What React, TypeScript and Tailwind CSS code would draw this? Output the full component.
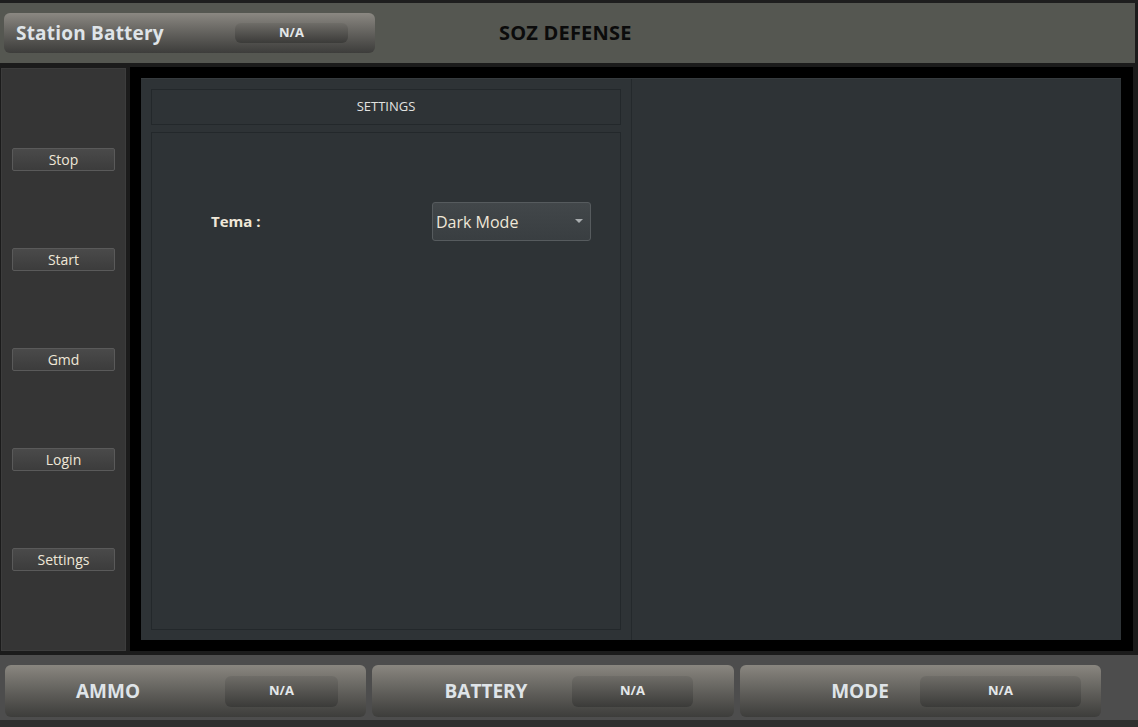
import React from "react";

const font = { fontFamily: '"Open Sans", "Noto Sans", "DejaVu Sans", sans-serif' };

function Pill({ w, h }: { w: string; h: string }) {
  return (
    <div
      className={`${w} ${h} rounded-[6px] bg-gradient-to-b from-[#6f6d68] to-[#3b3b39] flex items-center justify-center text-[13px] font-bold text-[#e4e8ea]`}
    >
      N/A
    </div>
  );
}

function SideButton({ label }: { label: string }) {
  return (
    <div className="ml-[10px] w-[103px] h-[23px] rounded-[2px] border border-[#5a5a5a] bg-gradient-to-b from-[#4a4a4a] to-[#3c3c3c] flex items-center justify-center text-[14px] text-[#efe7d8]">
      {label}
    </div>
  );
}

function BottomButton({
  label,
  labelCls,
  pillW,
  w,
}: {
  label: string;
  labelCls: string;
  pillW: string;
  w: string;
}) {
  return (
    <div
      className={`${w} h-[52px] rounded-[6px] bg-gradient-to-b from-[#8a8780] to-[#3d3d3b] flex items-center`}
    >
      <div className={`${labelCls} flex justify-center text-[19px] font-bold text-[#dfe4e8]`}>{label}</div>
      <Pill w={pillW} h="h-[31px]" />
    </div>
  );
}

export default function App() {
  return (
    <div className="w-[1138px] h-[727px] bg-[#1b1b1b] flex flex-col overflow-hidden" style={font}>
      <div className="h-[3px] bg-[#1e1e1e]" />
      {/* header */}
      <div className="h-[60px] bg-[#555751] flex items-center mr-[3px]">
        <div className="ml-[4px] w-[371px] h-[40px] rounded-[6px] bg-gradient-to-b from-[#8b8882] to-[#3d3d3b] flex items-center">
          <div className="ml-[12px] w-[219px] text-[19px] font-bold text-[#dfe4e8] tracking-[0.2px]">Station Battery</div>
          <Pill w="w-[113px]" h="h-[20px]" />
        </div>
        <div className="ml-[124px] text-[20px] font-bold text-[#0b0b0b] tracking-[0.2px]">SOZ DEFENSE</div>
      </div>
      <div className="h-[4px] bg-[#1b1b1b]" />
      {/* main */}
      <div className="h-[584px] flex">
        <div className="ml-[1px] mt-[1px] w-[125px] h-[583px] bg-[#353535] border border-[#3c3c3c] flex flex-col pt-[79px] gap-[77px]">
          <SideButton label="Stop" />
          <SideButton label="Start" />
          <SideButton label="Gmd" />
          <SideButton label="Login" />
          <SideButton label="Settings" />
        </div>
        <div className="ml-[4px] w-[1003px] h-[584px] bg-black pt-[11px] pl-[11px]">
          <div className="w-[980px] h-[562px] bg-[#2e3336] border-t border-[#363b3e] flex">
            <div className="w-[491px] h-full border-r border-[#24292c] p-[10px] flex flex-col gap-[7px]">
              <div className="h-[36px] border border-[#23282b] flex items-center justify-center text-[13px] text-[#e2e2e0]">
                SETTINGS
              </div>
              <div className="flex-1 border border-[#23282b] pt-[69px] pl-[59px]">
                <div className="flex items-center">
                  <div className="w-[221px] text-[15px] font-bold text-[#efe7d8]">Tema :</div>
                  <div className="w-[159px] h-[39px] rounded-[3px] border border-[#565b5e] bg-gradient-to-b from-[#42474a] to-[#393e41] flex items-center pl-[3px] pr-[7px]">
                    <span className="flex-1 text-[16px] text-[#efe7d8]">Dark Mode</span>
                    <svg width="8" height="5" viewBox="0 0 8 5">
                      <path d="M0 0 L8 0 L4 4 Z" fill="#a9adaf" />
                    </svg>
                  </div>
                </div>
              </div>
            </div>
            <div className="flex-1" />
          </div>
        </div>
      </div>
      <div className="h-[4px] bg-[#1b1b1b]" />
      {/* bottom */}
      <div className="h-[65px] bg-[#4d4d4d] flex pt-[10px] pl-[5px] gap-[6px]">
        <BottomButton label="AMMO" w="w-[361px]" labelCls="w-[220px] pr-[14px]" pillW="w-[113px]" />
        <BottomButton label="BATTERY" w="w-[362px]" labelCls="w-[200px] pl-[28px]" pillW="w-[121px]" />
        <BottomButton label="MODE" w="w-[361px]" labelCls="w-[180px] pl-[60px]" pillW="w-[161px]" />
      </div>
      <div className="flex-1 bg-[#2f2f2f]" />
    </div>
  );
}
